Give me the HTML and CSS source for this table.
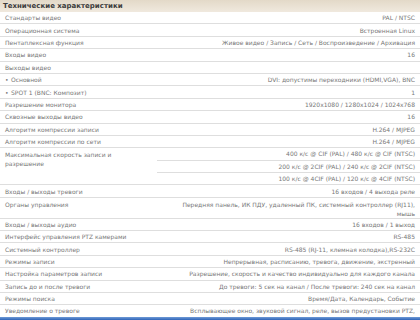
FILE: index.html
```html
<!DOCTYPE html>
<html lang="ru">
<head>
<meta charset="utf-8">
<title>Технические характеристики</title>
<link rel="stylesheet" href="styles.css">
</head>
<body>
<div class="title">Технические характеристики</div>
<table class="specs">
  <colgroup><col class="c-label"><col class="c-value"></colgroup>
  <tbody>
    <tr><td>Стандарты видео</td><td class="v">PAL / NTSC</td></tr>
    <tr><td>Операционная система</td><td class="v">Встроенная Linux</td></tr>
    <tr><td>Пентаплексная функция</td><td class="v">Живое видео / Запись / Сеть / Воспроизведение / Архивация</td></tr>
    <tr><td>Входы видео</td><td class="v">16</td></tr>
    <tr><td>Выходы видео</td><td class="v"></td></tr>
    <tr><td><span class="dot">•</span>Основной</td><td class="v">DVI: допустимы переходники (HDMI,VGA), BNC</td></tr>
    <tr><td><span class="dot">•</span>SPOT 1 (BNC: Композит)</td><td class="v">1</td></tr>
    <tr><td>Разрешение монитора</td><td class="v">1920x1080 / 1280x1024 / 1024x768</td></tr>
    <tr><td>Сквозные выходы видео</td><td class="v">16</td></tr>
    <tr><td>Алгоритм компрессии записи</td><td class="v">H.264 / MJPEG</td></tr>
    <tr><td>Алгоритм компрессии по сети</td><td class="v">H.264 / MJPEG</td></tr>
    <tr><td rowspan="3" class="multi">Максимальная скорость записи и<br>разрешение</td><td class="v">400 к/с @ CIF (PAL) / 480 к/с @ CIF (NTSC)</td></tr>
    <tr><td class="v">200 к/с @ 2CIF (PAL) / 240 к/с @ 2CIF (NTSC)</td></tr>
    <tr><td class="v">100 к/с @ 4CIF (PAL) / 120 к/с @ 4CIF (NTSC)</td></tr>
    <tr><td>Входы / выходы тревоги</td><td class="v">16 входов / 4 выхода реле</td></tr>
    <tr><td class="multi">Органы управления</td><td class="v multi">Передняя панель, ИК ПДУ, удаленный ПК, системный контроллер (RJ11),<br>мышь</td></tr>
    <tr><td>Входы / выходы аудио</td><td class="v">16 входов / 1 выход</td></tr>
    <tr><td>Интерфейс управления PTZ камерами</td><td class="v">RS-485</td></tr>
    <tr><td>Системный контроллер</td><td class="v">RS-485 (RJ-11, клемная колодка),RS-232C</td></tr>
    <tr><td>Режимы записи</td><td class="v">Непрерывная, расписанию, тревога, движение, экстренный</td></tr>
    <tr><td>Настройка параметров записи</td><td class="v">Разрешение, скорость и качество индивидуально для каждого канала</td></tr>
    <tr><td>Запись до и после тревоги</td><td class="v">До тревоги: 5 сек на канал / После тревоги: 240 сек на канал</td></tr>
    <tr><td>Режимы поиска</td><td class="v">Время/Дата, Календарь, Событие</td></tr>
    <tr><td>Уведомление о тревоге</td><td class="v">Всплывающее окно, звуковой сигнал, реле, вызов предустановки PTZ,</td></tr>
  </tbody>
</table>
<div class="taskbar"></div>
</body>
</html>
```
FILE: styles.css
```css
html, body {
  margin: 0;
  padding: 0;
  overflow: hidden;
  background: #ffffff;
}
body {
  width: 420px;
  font-family: "DejaVu Sans", Verdana, sans-serif;
  font-size: 6px;
  color: #777777;
}
.title {
  height: 12px;
  line-height: 12px;
  padding: 0 3px;
  font-size: 7px;
  font-weight: bold;
  color: #3c3c3c;
  background: linear-gradient(#e3d9c8, #f0e9de);
}
.specs {
  width: 420px;
  border-collapse: collapse;
  table-layout: fixed;
}
.c-label { width: 157px; }
.c-value { width: 263px; }
.specs td {
  height: 11.4px;
  padding: 0 3px 0 5px;
  line-height: 9px;
  border-bottom: 1px solid #dedede;
  white-space: nowrap;
  vertical-align: middle;
}
.specs td.multi {
  vertical-align: top;
  padding-top: 1.7px;
  white-space: normal;
}
.specs td.v {
  text-align: right;
  padding-right: 5px;
}
.dot {
  display: inline-block;
  width: 6px;
}
.taskbar {
  position: fixed;
  left: 0;
  right: 0;
  bottom: 0;
  height: 3px;
  background: linear-gradient(#6f9bd6, #2e63b8);
}
```
